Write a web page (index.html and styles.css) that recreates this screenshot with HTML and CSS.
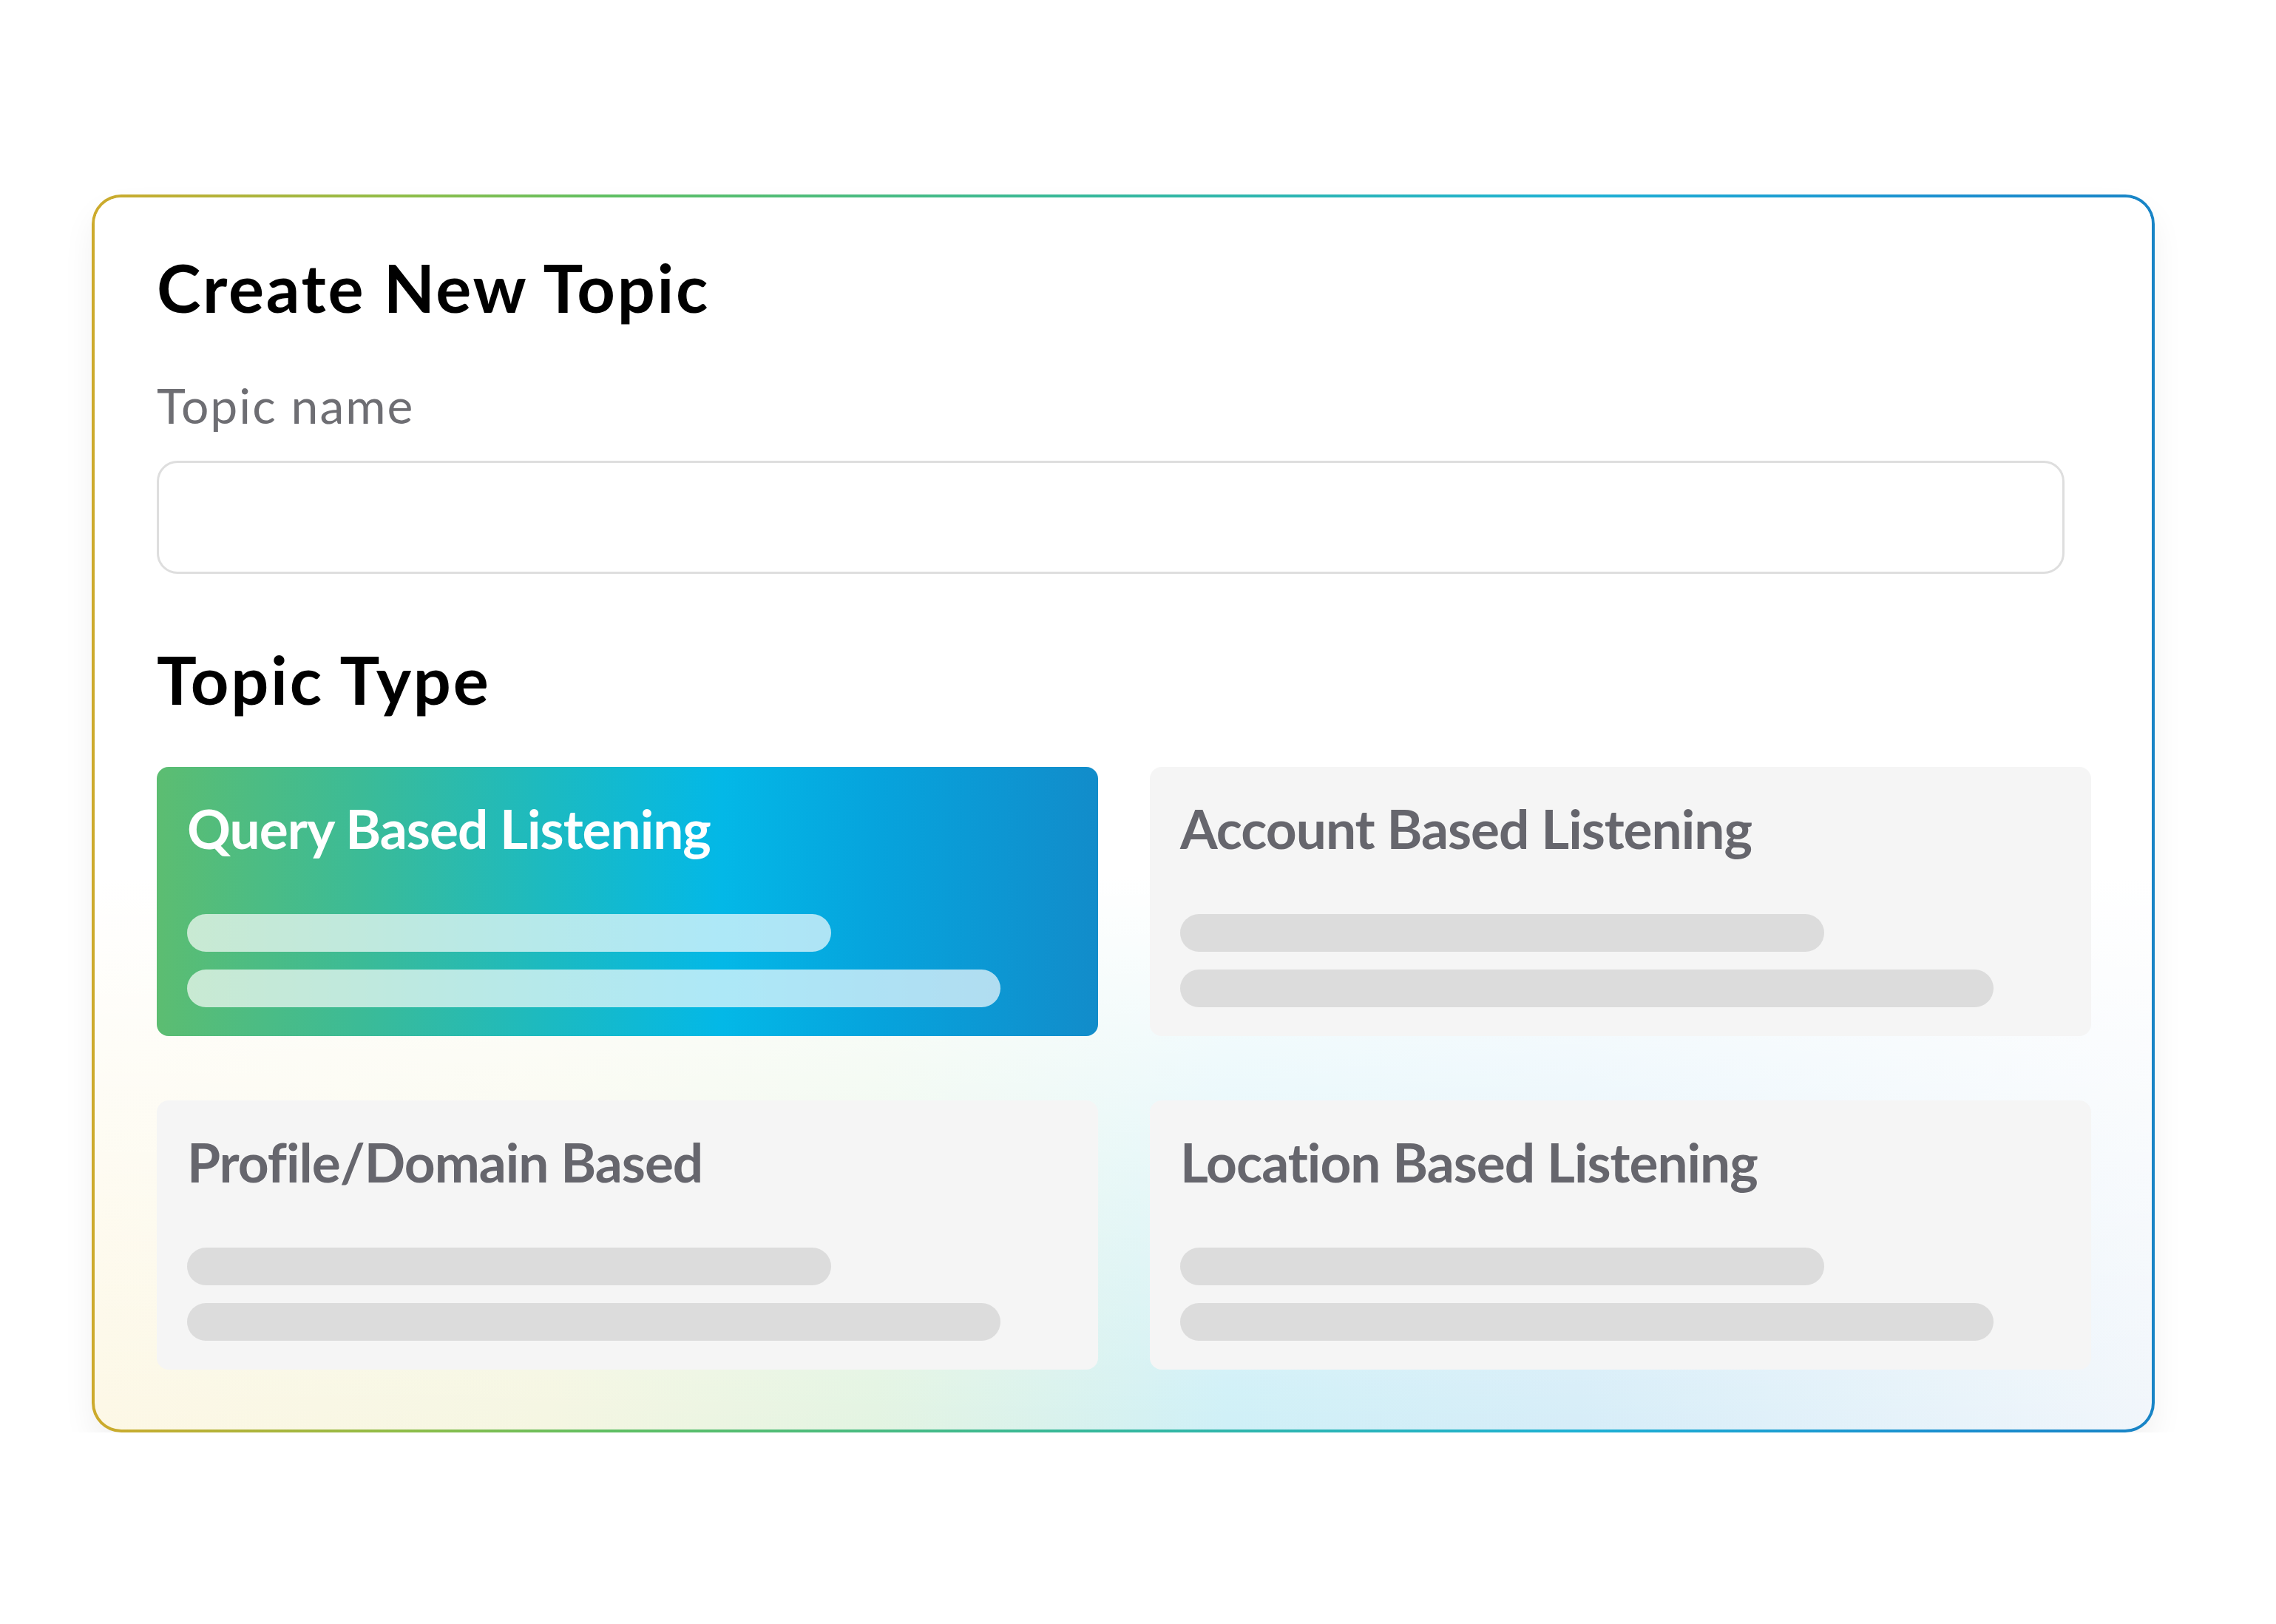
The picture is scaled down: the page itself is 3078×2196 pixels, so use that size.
FILE: index.html
```html
<!DOCTYPE html>
<html lang="en">
<head>
  <meta charset="UTF-8" />
  <title>Create New Topic</title>
  <link rel="stylesheet" href="styles.css">
</head>
<body>
  <div class="panel">
    <h1 class="title">Create New Topic</h1>

    <label class="field-label" for="topic-name">Topic name</label>
    <input id="topic-name" class="field-input" type="text" autocomplete="off" />

    <h2 class="title section-title">Topic Type</h2>

    <div class="type-grid">
      <div class="type-card active">
        <div class="type-name">Query Based Listening</div>
        <div class="bar short"></div>
        <div class="bar long"></div>
      </div>
      <div class="type-card">
        <div class="type-name">Account Based Listening</div>
        <div class="bar short"></div>
        <div class="bar long"></div>
      </div>
      <div class="type-card">
        <div class="type-name">Profile/Domain Based</div>
        <div class="bar short"></div>
        <div class="bar long"></div>
      </div>
      <div class="type-card">
        <div class="type-name">Location Based Listening</div>
        <div class="bar short"></div>
        <div class="bar long"></div>
      </div>
    </div>
  </div>
</body>
</html>
```

FILE: styles.css
```css
body {
  margin: 0;
  padding: 0;
  background: #ffffff;
  font-family: Lato, "Open Sans", sans-serif;
}

.panel {
  box-sizing: border-box;
  width: 2790px;
  margin: 263px 0 0 124px;
  padding: 76px 82px 81px 84px;
  border: 4px solid transparent;
  border-radius: 40px;
  /* fondo blanco con brillo de color abajo + borde degradado */
  background:
    linear-gradient(180deg, #ffffff 55%, rgba(255, 255, 255, 0) 100%) padding-box,
    linear-gradient(90deg, #fdf8e6 0%, #f5f6e2 22%, #e3f4e2 38%, #cff0f7 55%, #d6edf8 72%, #f1f6fb 100%) padding-box,
    linear-gradient(90deg, #cdaa2c 0%, #8fbd48 15%, #5fbf62 25%, #36b89a 48%, #1eb1d4 72%, #1a8fcf 90%, #1884c6 100%) border-box;
  box-shadow: 0 22px 44px rgba(0, 0, 0, 0.06);
}

.title {
  margin: 0;
  font-size: 90px;
  line-height: 1;
  font-weight: 700;
  letter-spacing: 2.7px;
  color: #000000;
}

.field-label {
  display: block;
  margin-top: 82px;
  font-size: 66px;
  line-height: 1;
  letter-spacing: 2px;
  color: #6e6e73;
}

.field-input {
  display: block;
  box-sizing: border-box;
  width: calc(100% - 36px);
  height: 153px;
  margin-top: 42px;
  border: 3px solid #dedede;
  border-radius: 28px;
  background: #ffffff;
  outline: none;
}

.section-title {
  margin-top: 97px;
}

.type-grid {
  display: grid;
  grid-template-columns: 1fr 1fr;
  column-gap: 70px;
  row-gap: 87px;
  margin-top: 74px;
}

.type-card {
  box-sizing: border-box;
  height: 364px;
  padding: 47px 41px 39px 41px;
  border-radius: 16px;
  background: #f5f5f5;
}

.type-card.active {
  background: linear-gradient(90deg, #5cbd71 0%, #3bbb97 22%, #1bbac2 42%, #03b8e7 60%, #06a4dd 76%, #128cca 100%);
}

.type-name {
  font-size: 73px;
  line-height: 1;
  font-weight: 700;
  letter-spacing: -1px;
  color: #66666d;
}

.active .type-name {
  color: #ffffff;
}

.bar {
  height: 51px;
  border-radius: 26px;
  background: #dcdcdc;
}

.bar.short {
  width: 871px;
  margin-top: 79px;
}

.bar.long {
  width: 1100px;
  margin-top: 24px;
}

.active .bar {
  background: rgba(255, 255, 255, 0.68);
}
```
